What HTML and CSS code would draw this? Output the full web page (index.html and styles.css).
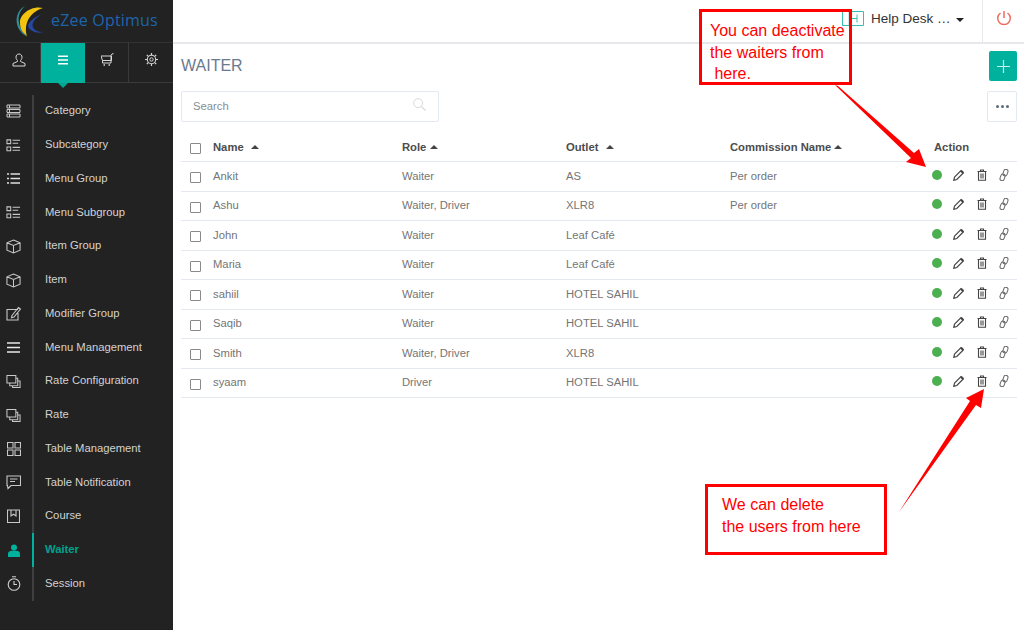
FILE: index.html
```html
<!DOCTYPE html>
<html lang="en">
<head>
<meta charset="utf-8">
<title>Waiter</title>
<link rel="stylesheet" href="styles.css">
</head>
<body>
<svg class="defs" width="0" height="0">
  <symbol id="i-pencil" viewBox="0 0 12 12"><path d="M1.500 8.200 8 1.700l2.300 2.300-6.500 6.500-3 .8z" fill="none" stroke="currentColor" stroke-width="1.200"/><path d="M7.200 2.500l2.300 2.300 1.500-1.500-2.300-2.300z" fill="currentColor"/></symbol>
  <symbol id="i-trash" viewBox="0 0 12 12"><path d="M2.500 2.500h7V11.300h-7zM1.500 2.500h9M4.500 2.300V1h3v1.300M5 4.500V9.500M7 4.500V9.500" fill="none" stroke="currentColor" stroke-width="1.100"/></symbol>
  <symbol id="i-link" viewBox="0 0 12 12"><g fill="none" stroke="currentColor"><rect x="5.400" y="0.200" width="4.200" height="6.800" rx="2.100" transform="rotate(20 7.400 3.500)"/><rect x="2.400" y="5" width="4.200" height="6.800" rx="2.100" transform="rotate(20 4.600 8.500)"/></g></symbol>
  <symbol id="i-caret" viewBox="0 0 8 4"><path d="M0 4 4 0l4 4z" fill="currentColor"/></symbol>
  <symbol id="i-box" viewBox="0 0 16 16"><path d="M8 1 15 4v8l-7 3-7-3V4zM1 4l7 3 7-3M8 7v8" fill="none" stroke="currentColor" stroke-width="1.100"/></symbol>
  <symbol id="i-stack" viewBox="0 0 16 16"><path d="M1 1.500h9.500v8H1zM4 9.500v3h8.500v-8h-2M7 12.500v2h8v-7h-2.500" fill="none" stroke="currentColor" stroke-width="1.100"/></symbol>
  <symbol id="i-sub" viewBox="0 0 16 16"><path d="M1 2h4v4H1zM1 9.500h4v4H1zM7 2.500h8M7 5.500h6M7 10h8M7 13h8" fill="none" stroke="currentColor" stroke-width="1.100"/></symbol>
</svg>

<div class="app">
  <aside class="sidebar">
    <div class="brand">
      <svg class="logo" width="31" height="33" viewBox="0 0 31 33">
        <path d="M12 1C3 5-2 22 14 32 6 24 1 11 12 1z" fill="#2f8f9c"/>
        <path d="M30 3C18 0 6 10 7 18c0 6 3 10 7 13-3-9 0-23 16-28z" fill="#f2c40f"/>
        <path d="M30 9C20 12 15 18 15 21c1 5 9 8 15 6-8 0-12-5-10-9 1-3 5-7 10-9z" fill="#27479c"/>
      </svg>
      <span class="brand-name">eZee Optimus</span>
    </div>
    <nav class="tabs">
      <div class="tab">
        <svg width="14" height="14" viewBox="0 0 14 14"><path d="M7 1c2 0 3 1.500 3 3.200S9 7 8.500 7.500v1L13 10.500V13H1v-2.500l4.500-2v-1C5 7 4 6 4 4.200S5 1 7 1z" fill="none" stroke="#d8d8d8"/></svg>
      </div>
      <div class="tab tab-active">
        <svg width="12" height="10" viewBox="0 0 12 10"><path d="M1 1.200h10M1 5h10M1 8.800h10" stroke="#fff" stroke-width="1.500"/></svg>
      </div>
      <div class="tab">
        <svg width="13" height="13" viewBox="0 0 13 13"><path d="M0 3h10.500v4.500H1.500zM1.500 7.500V10h8.500V2.500L11 1l1.500-.5" fill="none" stroke="#d8d8d8"/><path d="M2.500 12h1.500M7.500 12H9" stroke="#d8d8d8" stroke-width="1.400"/></svg>
      </div>
      <div class="tab">
        <svg width="13" height="13" viewBox="0 0 13 13"><circle cx="6.500" cy="6.500" r="4.200" fill="none" stroke="#d8d8d8" stroke-width="1.100"/><circle cx="6.500" cy="6.500" r="1.700" fill="none" stroke="#d8d8d8"/><path d="M6.500 0v2M6.500 11v2M0 6.500h2M11 6.500h2M1.800 1.800l1.500 1.500M9.700 9.700l1.500 1.500M1.800 11.200l1.500-1.500M9.700 3.300l1.500-1.500" stroke="#d8d8d8" stroke-width="1.200"/></svg>
      </div>
    </nav>
    <ul class="menu">
      <li class="menu-item"><span class="menu-icon"><svg width="15" height="14" viewBox="0 0 15 14"><path d="M1 1h13v3H1zM1 5.500h13v3H1zM1 10h13v3H1zM3.500 1v3M3.500 5.500v3M3.500 10v3" fill="none" stroke="#c8c8c8"/></svg></span><span class="menu-label">Category</span></li>
      <li class="menu-item"><span class="menu-icon"><svg width="15" height="15"><use href="#i-sub"/></svg></span><span class="menu-label">Subcategory</span></li>
      <li class="menu-item"><span class="menu-icon"><svg width="13" height="11" viewBox="0 0 13 11"><path d="M0 1h2M0 5.500h2M0 10h2M3.500 1H13M3.500 5.500H13M3.500 10H13" stroke="#e0e0e0" stroke-width="1.300"/></svg></span><span class="menu-label">Menu Group</span></li>
      <li class="menu-item"><span class="menu-icon"><svg width="15" height="15"><use href="#i-sub"/></svg></span><span class="menu-label">Menu Subgroup</span></li>
      <li class="menu-item"><span class="menu-icon"><svg width="15" height="15"><use href="#i-box"/></svg></span><span class="menu-label">Item Group</span></li>
      <li class="menu-item"><span class="menu-icon"><svg width="15" height="15"><use href="#i-box"/></svg></span><span class="menu-label">Item</span></li>
      <li class="menu-item"><span class="menu-icon"><svg width="15" height="15" viewBox="0 0 15 15"><path d="M12 3.500H1V14h11V7M6 9.500 12.500 1.500l2 1.500L8 11l-2.500.8z" fill="none" stroke="#c8c8c8" stroke-width="1.100"/></svg></span><span class="menu-label">Modifier Group</span></li>
      <li class="menu-item"><span class="menu-icon"><svg width="13" height="11" viewBox="0 0 13 11"><path d="M0 1h13M0 5.500h13M0 10h13" stroke="#e8e8e8" stroke-width="1.700"/></svg></span><span class="menu-label">Menu Management</span></li>
      <li class="menu-item"><span class="menu-icon"><svg width="15" height="15"><use href="#i-stack"/></svg></span><span class="menu-label">Rate Configuration</span></li>
      <li class="menu-item"><span class="menu-icon"><svg width="15" height="15"><use href="#i-stack"/></svg></span><span class="menu-label">Rate</span></li>
      <li class="menu-item"><span class="menu-icon"><svg width="14" height="14" viewBox="0 0 14 14"><path d="M.5.500h5.500v5.500H.5zM8 .5h5.500v5.500H8zM.5 8H6v5.500H.5zM8 8h5.500v5.500H8z" fill="none" stroke="#c8c8c8" stroke-width="1.100"/></svg></span><span class="menu-label">Table Management</span></li>
      <li class="menu-item"><span class="menu-icon"><svg width="15" height="15" viewBox="0 0 15 15"><path d="M1 1h13.500v9.500H5L2 13.500l-.5-3H1zM4 4h7.500M4 6.500h5" fill="none" stroke="#c8c8c8" stroke-width="1.100"/></svg></span><span class="menu-label">Table Notification</span></li>
      <li class="menu-item"><span class="menu-icon"><svg width="13" height="14" viewBox="0 0 13 14"><path d="M.5 1h12v12.500H.5zM4 1v6l2.500-1.800L9 7V1" fill="none" stroke="#c8c8c8" stroke-width="1.100"/></svg></span><span class="menu-label">Course</span></li>
      <li class="menu-item menu-item-active"><span class="menu-icon"><svg width="12" height="13" viewBox="0 0 12 13"><circle cx="6" cy="3.500" r="3" fill="#00b19d"/><path d="M0 13V9.500C0 7.500 2 6.500 6 6.500s6 1 6 3V13z" fill="#00b19d"/></svg></span><span class="menu-label">Waiter</span></li>
      <li class="menu-item"><span class="menu-icon"><svg width="14" height="15" viewBox="0 0 14 15"><circle cx="7" cy="8.500" r="5.800" fill="none" stroke="#d0d0d0" stroke-width="1.100"/><path d="M5 .8h4M7 5v3.500h3" fill="none" stroke="#d0d0d0" stroke-width="1.100"/></svg></span><span class="menu-label">Session</span></li>
    </ul>
  </aside>

  <div class="main">
    <header class="topbar">
      <div class="helpdesk">
        <svg class="help-icon" width="22" height="15" viewBox="0 0 22 15"><path d="M.5.500h21v14H.5z" fill="none" stroke="#36bfae"/><path d="M7 1v13" stroke="#36bfae" opacity=".5"/><path d="M9 3.500v8M15 3.500v8M9 7.500h6" stroke="#36bfae"/></svg>
        <span>Help Desk …</span>
        <span class="help-caret"></span>
      </div>
      <div class="power">
        <svg width="16" height="16" viewBox="0 0 16 16"><path d="M8 1v7" stroke="#f0695f" stroke-width="1.500" fill="none"/><path d="M4.500 3A6.300 6.300 0 1 0 11.500 3" stroke="#f0695f" stroke-width="1.500" fill="none"/></svg>
      </div>
    </header>

    <section class="content">
      <div class="title-row">
        <h1 class="page-title">WAITER</h1>
        <button class="btn-add"><svg width="13" height="13" viewBox="0 0 13 13"><path d="M6.500 0v13M0 6.500h13" stroke="#cdf3ee" stroke-width="1.200"/></svg></button>
      </div>
      <div class="search-row">
        <div class="search">
          <span class="search-text">Search</span>
          <svg class="search-icon" width="13" height="13" viewBox="0 0 14 14"><circle cx="5.500" cy="5.500" r="4.800" fill="none" stroke="#d3d7da"/><path d="M9 9l4.500 4.500" stroke="#d3d7da" stroke-width="1.200"/></svg>
        </div>
        <button class="btn-more"><span></span><span></span><span></span></button>
      </div>

      <div class="table">
        <div class="row head">
          <span class="c-check"><i class="check"></i></span>
          <span class="c-name">Name <svg class="caret caret-wide" width="8" height="4"><use href="#i-caret"/></svg></span>
          <span class="c-role">Role <svg class="caret" width="8" height="4"><use href="#i-caret"/></svg></span>
          <span class="c-outlet">Outlet <svg class="caret caret-wide" width="8" height="4"><use href="#i-caret"/></svg></span>
          <span class="c-comm">Commission Name <svg class="caret" width="8" height="4"><use href="#i-caret"/></svg></span>
          <span class="c-action">Action</span>
        </div>
        <div class="row"><span class="c-check"><i class="check"></i></span><span class="c-name">Ankit</span><span class="c-role">Waiter</span><span class="c-outlet">AS</span><span class="c-comm">Per order</span><span class="c-action acts"><i class="dot"></i><svg class="pen" width="12" height="12"><use href="#i-pencil"/></svg><svg class="bin" width="12" height="12"><use href="#i-trash"/></svg><svg class="lnk" width="12" height="12"><use href="#i-link"/></svg></span></div>
        <div class="row"><span class="c-check"><i class="check"></i></span><span class="c-name">Ashu</span><span class="c-role">Waiter, Driver</span><span class="c-outlet">XLR8</span><span class="c-comm">Per order</span><span class="c-action acts"><i class="dot"></i><svg class="pen" width="12" height="12"><use href="#i-pencil"/></svg><svg class="bin" width="12" height="12"><use href="#i-trash"/></svg><svg class="lnk" width="12" height="12"><use href="#i-link"/></svg></span></div>
        <div class="row"><span class="c-check"><i class="check"></i></span><span class="c-name">John</span><span class="c-role">Waiter</span><span class="c-outlet">Leaf Café</span><span class="c-comm"></span><span class="c-action acts"><i class="dot"></i><svg class="pen" width="12" height="12"><use href="#i-pencil"/></svg><svg class="bin" width="12" height="12"><use href="#i-trash"/></svg><svg class="lnk" width="12" height="12"><use href="#i-link"/></svg></span></div>
        <div class="row"><span class="c-check"><i class="check"></i></span><span class="c-name">Maria</span><span class="c-role">Waiter</span><span class="c-outlet">Leaf Café</span><span class="c-comm"></span><span class="c-action acts"><i class="dot"></i><svg class="pen" width="12" height="12"><use href="#i-pencil"/></svg><svg class="bin" width="12" height="12"><use href="#i-trash"/></svg><svg class="lnk" width="12" height="12"><use href="#i-link"/></svg></span></div>
        <div class="row"><span class="c-check"><i class="check"></i></span><span class="c-name">sahiil</span><span class="c-role">Waiter</span><span class="c-outlet">HOTEL SAHIL</span><span class="c-comm"></span><span class="c-action acts"><i class="dot"></i><svg class="pen" width="12" height="12"><use href="#i-pencil"/></svg><svg class="bin" width="12" height="12"><use href="#i-trash"/></svg><svg class="lnk" width="12" height="12"><use href="#i-link"/></svg></span></div>
        <div class="row"><span class="c-check"><i class="check"></i></span><span class="c-name">Saqib</span><span class="c-role">Waiter</span><span class="c-outlet">HOTEL SAHIL</span><span class="c-comm"></span><span class="c-action acts"><i class="dot"></i><svg class="pen" width="12" height="12"><use href="#i-pencil"/></svg><svg class="bin" width="12" height="12"><use href="#i-trash"/></svg><svg class="lnk" width="12" height="12"><use href="#i-link"/></svg></span></div>
        <div class="row"><span class="c-check"><i class="check"></i></span><span class="c-name">Smith</span><span class="c-role">Waiter, Driver</span><span class="c-outlet">XLR8</span><span class="c-comm"></span><span class="c-action acts"><i class="dot"></i><svg class="pen" width="12" height="12"><use href="#i-pencil"/></svg><svg class="bin" width="12" height="12"><use href="#i-trash"/></svg><svg class="lnk" width="12" height="12"><use href="#i-link"/></svg></span></div>
        <div class="row"><span class="c-check"><i class="check"></i></span><span class="c-name">syaam</span><span class="c-role">Driver</span><span class="c-outlet">HOTEL SAHIL</span><span class="c-comm"></span><span class="c-action acts"><i class="dot"></i><svg class="pen" width="12" height="12"><use href="#i-pencil"/></svg><svg class="bin" width="12" height="12"><use href="#i-trash"/></svg><svg class="lnk" width="12" height="12"><use href="#i-link"/></svg></span></div>
      </div>
    </section>
  </div>
</div>

<div class="note note-top">You can deactivate<br>the waiters from<br>&nbsp;here.</div>
<div class="note note-bottom">We can delete<br>the users from here</div>
<svg class="arrows" width="1024" height="630" viewBox="0 0 1024 630">
  <path d="M835 85 838 86 914 153 919 149 926 167 906 162 911 158z" fill="#f00"/>
  <path d="M899 512 970 401 966 398 984 389 981 408 976 405z" fill="#f00"/>
</svg>
</body>
</html>
```
FILE: styles.css
```css
* { box-sizing: border-box; }
html, body { margin: 0; padding: 0; height: 630px; overflow: hidden; background: #fff; }
body { font-family: "Liberation Sans", sans-serif; position: relative; }
.defs { position: absolute; }
.app { display: flex; width: 1024px; height: 630px; }

/* Sidebar */
.sidebar { width: 173px; flex: none; background: #222222; color: #d4d4d4; }
.brand { height: 43px; display: flex; align-items: center; padding: 0 0 0 13px; gap: 7px; border-bottom: 1px solid #333; }
.logo { flex: none; }
.brand-name { font-family: "Open Sans", sans-serif; font-size: 16px; letter-spacing: .2px; color: #1c65ad; white-space: nowrap; margin-top: -2px; }
.tabs { display: grid; grid-template-columns: 41px 44px 44px 44px; height: 40px; border-bottom: 1px solid #3a3a3a; }
.tab { display: flex; align-items: center; justify-content: center; border-right: 1px solid #3a3a3a; padding-bottom: 6px; }
.tab:first-child svg { margin-left: -3px; }
.tab:nth-child(3) svg { margin-left: 2px; }
.tab:last-child { border-right: 0; }
.tab-active { background: #00b19d; position: relative; border-right: 0; margin-bottom: -1px; }
.tab-active::after { content: ""; position: absolute; left: 17px; bottom: -5px; border: 5px solid transparent; border-bottom: 0; border-top-color: #00a592; }
.menu { list-style: none; margin: 11.500px 0 0; padding: 0; }
.menu-item { height: 33.75px; display: flex; align-items: center; font-size: 11.25px; color: #d2d2d2; }
.menu-icon { width: 33px; height: 100%; flex: none; border-right: 2px solid #3f3f3f; margin-right: 11px; display: flex; align-items: center; justify-content: center; padding-right: 6px; color: #c8c8c8; margin-left: 1px; }
.menu-label { white-space: nowrap; position: relative; top: -1px; }
.menu-item-active { color: #00a18e; font-weight: 700; }
.menu-item-active .menu-icon { border-right-color: #00b19d; }

/* Main */
.main { flex: 1; min-width: 0; display: flex; flex-direction: column; }
.topbar { height: 44px; flex: none; border-bottom: 2px solid #e6e8ec; display: flex; justify-content: flex-end; align-items: stretch; }
.helpdesk { display: flex; align-items: center; font-size: 13.500px; color: #333; width: 140px; padding: 0 0 5px 0; }
.help-icon { margin-right: 7px; flex: none; }
.help-caret { margin-left: 5px; margin-top: 2px; border: 4px solid transparent; border-bottom: 0; border-top-color: #222; }
.power { width: 42px; border-left: 1px solid #e6e8ec; display: flex; align-items: center; justify-content: center; padding-bottom: 6px; }
.content { padding: 7px 7px 0 8px; flex: 1; }
.title-row { display: flex; justify-content: space-between; align-items: flex-start; height: 40px; }
.page-title { margin: 5px 0 0; font-size: 16px; font-weight: 400; color: #6a7a8e; line-height: 20px; }
.btn-add { width: 28px; height: 30px; border: 0; border-radius: 2px; background: #00b19d; padding: 0; display: flex; align-items: center; justify-content: center; }
.search-row { display: flex; justify-content: space-between; align-items: flex-start; height: 42px; }
.search { width: 258px; height: 31px; border: 1px solid #e4e8f0; border-radius: 2px; display: flex; align-items: center; justify-content: space-between; padding: 0 12px 1px 11px; }
.search-text { font-size: 11.25px; color: #868e96; }
.search-icon { margin-top: -3px; }
.btn-more { width: 30px; height: 31px; border: 1px solid #e4e8f0; border-radius: 2px; background: #fff; padding: 0; display: flex; align-items: center; justify-content: center; gap: 2px; }
.btn-more span { width: 3px; height: 3px; border-radius: 50%; background: #5b6b7c; }

/* Table */
.table { width: 836px; font-size: 11.25px; color: #757575; }
.row { display: grid; grid-template-columns: 32px 189px 164px 164px 204px 83px; height: 29.5px; align-items: center; border-bottom: 1px solid #e4e8f0; }
.row.head { height: 29px; color: #4d4d4d; font-weight: 700; }
.row > span { white-space: nowrap; position: relative; top: -0.500px; }
.row > .c-check { padding-left: 9px; display: flex; top: 1.500px; }
.check { width: 11px; height: 11px; border: 1px solid #8a8a8a; border-radius: 1px; background: #fff; display: block; }
.caret { color: #444; position: relative; top: -2px; }
.caret-wide { margin-left: 4px; }
.row > .acts { display: flex; align-items: center; top: -1.500px; }
.dot { width: 10px; height: 10px; border-radius: 50%; background: #4caf50; margin-left: -2px; }
.pen { margin-left: 11px; color: #444; }
.bin { margin-left: 11px; color: #444; }
.lnk { margin-left: 10px; color: #666; }

/* Annotations */
.note { position: absolute; font-family: "Liberation Sans", sans-serif; color: #f00; background: #fff; border: 3px solid #f00; font-size: 16px; line-height: 21.500px; }
.note-top { left: 699px; top: 9px; width: 153px; height: 76px; padding: 8px 0 0 8px; background: transparent; white-space: nowrap; }
.note-bottom { left: 705px; top: 484px; width: 182px; height: 71px; padding: 7px 0 0 14px; line-height: 22px; }
.arrows { position: absolute; left: 0; top: 0; pointer-events: none; }
```
